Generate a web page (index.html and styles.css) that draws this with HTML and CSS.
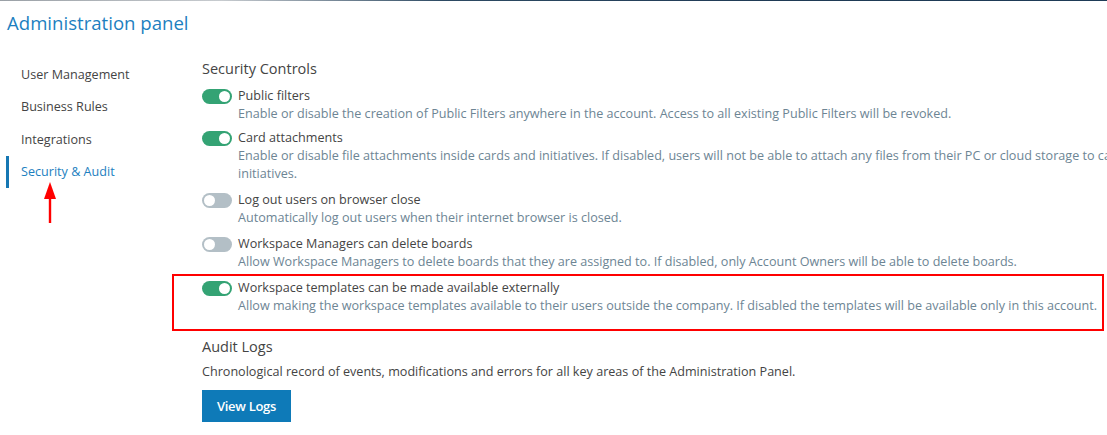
FILE: index.html
```html
<!DOCTYPE html>
<html>
<head>
<meta charset="utf-8">
<link rel="stylesheet" href="styles.css">
</head>
<body>
<div class="topline"></div>
<h1 class="page-title">Administration panel</h1>
<div class="layout">
  <nav class="sidebar">
    <a class="nav-item">User Management</a>
    <a class="nav-item">Business Rules</a>
    <a class="nav-item">Integrations</a>
    <a class="nav-item active">Security &amp; Audit
      <svg class="arrow" width="14" height="42" viewBox="0 0 14 42"><polygon points="7,0 13,17 1,17" fill="#f00"/><rect x="5.8" y="15" width="2.4" height="26" fill="#f00"/></svg>
    </a>
  </nav>
  <main class="content">
    <h2 class="section-title">Security Controls</h2>
    <div class="setting first">
      <span class="toggle on"></span>
      <div class="setting-text">
        <div class="setting-title">Public filters</div>
        <div class="setting-desc">Enable or disable the creation of Public Filters anywhere in the account. Access to all existing Public Filters will be revoked.</div>
      </div>
    </div>
    <div class="setting">
      <span class="toggle on"></span>
      <div class="setting-text">
        <div class="setting-title">Card attachments</div>
        <div class="setting-desc">Enable or disable file attachments inside cards and initiatives. If disabled, users will not be able to attach any files from their PC or cloud storage to cards and<br>initiatives.</div>
      </div>
    </div>
    <div class="setting">
      <span class="toggle"></span>
      <div class="setting-text">
        <div class="setting-title">Log out users on browser close</div>
        <div class="setting-desc">Automatically log out users when their internet browser is closed.</div>
      </div>
    </div>
    <div class="setting">
      <span class="toggle"></span>
      <div class="setting-text">
        <div class="setting-title">Workspace Managers can delete boards</div>
        <div class="setting-desc">Allow Workspace Managers to delete boards that they are assigned to. If disabled, only Account Owners will be able to delete boards.</div>
      </div>
    </div>
    <div class="setting highlighted">
      <span class="toggle on"></span>
      <div class="setting-text">
        <div class="setting-title">Workspace templates can be made available externally</div>
        <div class="setting-desc">Allow making the workspace templates available to their users outside the company. If disabled the templates will be available only in this account.</div>
      </div>
    </div>
    <h2 class="section-title audit">Audit Logs</h2>
    <p class="audit-desc">Chronological record of events, modifications and errors for all key areas of the Administration Panel.</p>
    <button class="btn">View Logs</button>
  </main>
</div>
</body>
</html>
```

FILE: styles.css
```css
html, body {
  margin: 0;
  padding: 0;
  background: #fff;
  overflow: hidden;
}
body {
  font-family: "Open Sans", "Noto Sans", sans-serif;
  width: 1107px;
  height: 435px;
  position: relative;
}
.topline {
  height: 1px;
  background: linear-gradient(90deg, #9aa0a6 0%, #c7cbcf 20%, #2d4a63 40%, #1f3a55 70%, #1e3b57 100%);
}
.page-title {
  margin: 10px 0 0 7px;
  font-size: 18.6px;
  font-weight: 400;
  color: #1d7fbf;
  line-height: 24px;
}
.layout {
  display: flex;
  margin-top: 24px;
}
.sidebar {
  width: 196px;
  flex: none;
  display: flex;
  flex-direction: column;
  padding-left: 6px;
  padding-top: 0;
}
.nav-item {
  display: block;
  position: relative;
  font-size: 12.6px;
  line-height: 32.3px;
  color: #444;
  padding-left: 12px;
  border-left: 3px solid transparent;
}
.nav-item.active {
  color: #1d7fbf;
  border-left-color: #1677b3;
}
.arrow {
  position: absolute;
  left: 34px;
  top: 26px;
}
.content {
  flex: 1;
  min-width: 0;
  white-space: nowrap;
}
.section-title {
  margin: 0 0 8px 0;
  font-size: 14.5px;
  font-weight: 400;
  color: #444;
  line-height: 20px;
}
.setting {
  display: flex;
  align-items: flex-start;
  margin-bottom: 8px;
  position: relative;
}
.setting.first {
  margin-bottom: 6px;
}
.toggle {
  flex: none;
  width: 30px;
  height: 15px;
  border-radius: 8px;
  background: #b3bfc6;
  position: relative;
  margin-top: 2px;
  margin-right: 6px;
}
.toggle::after {
  content: "";
  position: absolute;
  top: 2px;
  left: 2px;
  width: 11px;
  height: 11px;
  border-radius: 50%;
  background: #fff;
}
.toggle.on {
  background: #34a374;
}
.toggle.on::after {
  left: 17px;
}
.setting-title {
  font-size: 12.6px;
  line-height: 18px;
  color: #444;
}
.setting-desc {
  font-size: 12.6px;
  line-height: 18px;
  color: #6d8594;
}
.setting.highlighted::before {
  content: "";
  position: absolute;
  left: -30px;
  top: -5px;
  width: 928px;
  height: 53px;
  border: 2px solid #f00;
}
.audit {
  margin-top: 22px;
  margin-bottom: 0;
}
.audit-desc {
  margin: 6px 0 9px 0;
  font-size: 12.6px;
  line-height: 18px;
  color: #444;
}
.btn {
  font-family: "Open Sans", "Noto Sans", sans-serif;
  background: #0e7ab8;
  color: #fff;
  border: none;
  width: 89px;
  height: 32px;
  font-size: 13px;
  font-weight: 600;
  padding: 0;
  letter-spacing: -0.3px;
}
```
